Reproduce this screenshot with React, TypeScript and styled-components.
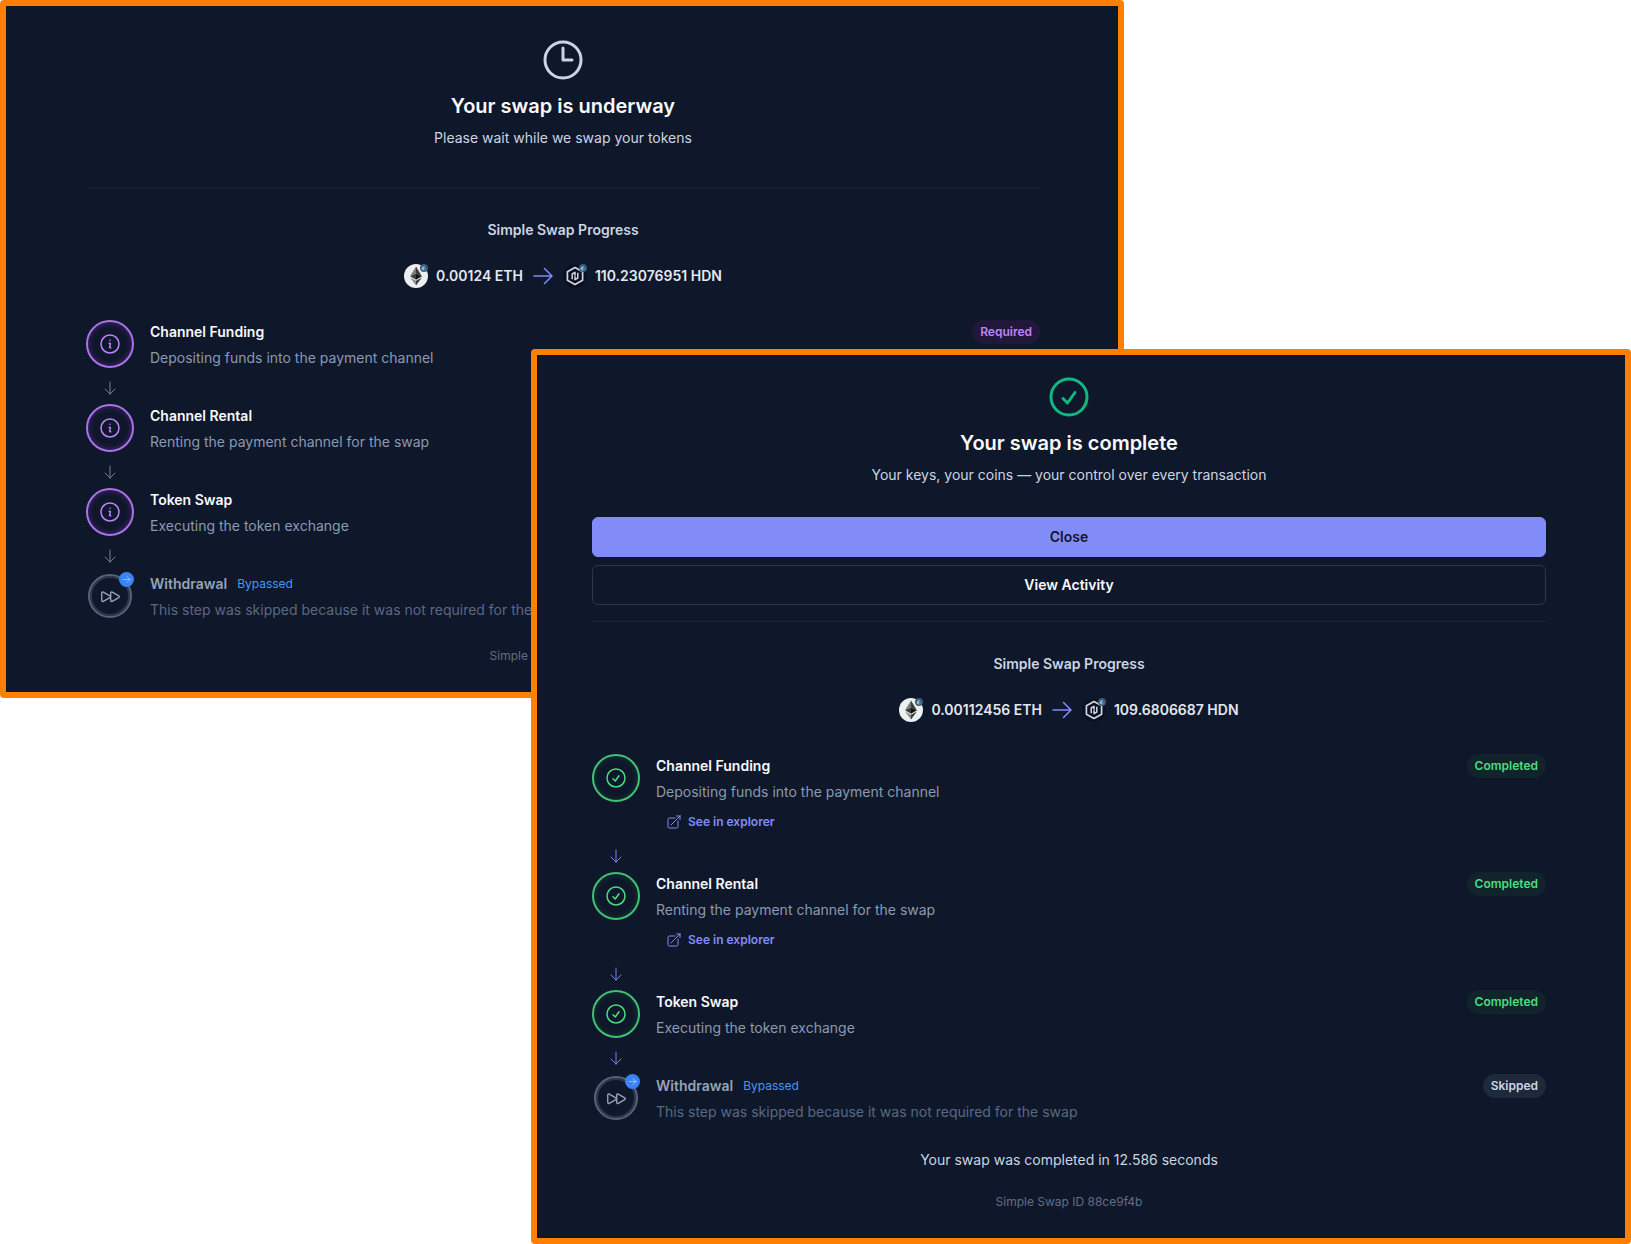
import React from "react";
import styled, { createGlobalStyle, css } from "styled-components";
import {
  HiOutlineArrowDown,
  HiOutlineArrowRight,
  HiOutlineArrowTopRightOnSquare,
  HiOutlineCheckCircle,
  HiOutlineClock,
  HiOutlineForward,
  HiOutlineInformationCircle,
} from "react-icons/hi2";

type Status = "required" | "completed" | "skipped";

interface Step {
  title: string;
  text: string;
  status: Status;
  explorer?: boolean;
}

interface Swap {
  from: string;
  to: string;
  id: string;
  steps: Step[];
}

const color = {
  panel: "#0f172a",
  frame: "#ff8000",
  white: "#f8fafc",
  light: "#cbd5e1",
  muted: "#8b9ab0",
  dim: "#5a6981",
  faint: "#606e86",
  line: "#1e293b",
  indigo: "#818cf8",
  purple: "#c084fc",
  green: "#4ade80",
  blue: "#4b93f5",
};

const GlobalStyle = createGlobalStyle`
  *, *::before, *::after { box-sizing: border-box; }
  body {
    margin: 0;
    background: #ffffff;
    font-family: Inter, Roboto, sans-serif;
    font-size: 14px;
    line-height: 20px;
  }
  h1, h2, h3, p, ol { margin: 0; padding: 0; font-size: inherit; }
  svg { display: block; flex: none; }
`;

const Stage = styled.main`
  display: grid;
  grid-template-columns: minmax(0, 531fr) minmax(0, 593fr) minmax(0, 507fr);
  grid-template-rows: 349px auto;
`;

const Window = styled.section<{ $front?: boolean }>`
  border: 6px solid ${color.frame};
  border-radius: 4px;
  background: ${color.panel};
  color: ${color.white};
  align-self: start;
  ${(p) =>
    p.$front
      ? css`
          grid-area: 2 / 2 / 3 / 4;
          padding: 18px 79px 28px 55px;
          z-index: 1;
        `
      : css`
          grid-area: 1 / 1 / 3 / 3;
          padding: 30px 78px 28px 80px;
        `}
`;

const Header = styled.header<{ $done?: boolean }>`
  display: flex;
  flex-direction: column;
  align-items: center;
  gap: 8px;
  text-align: center;

  > svg {
    color: ${(p) => (p.$done ? "#10b981" : color.light)};
  }
`;

const Title = styled.h1`
  font-size: 20px;
  line-height: 28px;
  font-weight: 600;
`;

const Subtitle = styled.p`
  color: ${color.light};
`;

const Actions = styled.div`
  display: flex;
  flex-direction: column;
  gap: 8px;
  margin-top: 32px;
`;

const Button = styled.button<{ $primary?: boolean }>`
  height: 40px;
  border-radius: 6px;
  border: 1px solid ${(p) => (p.$primary ? color.indigo : "#2b384b")};
  background: ${(p) => (p.$primary ? color.indigo : "transparent")};
  color: ${(p) => (p.$primary ? color.panel : color.white)};
  font: 600 14px/20px Inter, Roboto, sans-serif;
  cursor: pointer;
`;

const Divider = styled.hr<{ $wide?: boolean }>`
  margin: ${(p) => (p.$wide ? "39px 0 31px" : "16px 0 32px")};
  border: 0;
  height: ${(p) => (p.$wide ? 2 : 1)}px;
  background: ${(p) => (p.$wide ? "#151e30" : color.line)};
`;

const ProgressTitle = styled.h2`
  color: ${color.light};
  font-weight: 600;
  text-align: center;
`;

const Pair = styled.div`
  display: flex;
  justify-content: center;
  align-items: center;
  gap: 8px;
  margin: 24px 0 32px;
  color: ${color.indigo};
`;

const Amount = styled.span`
  color: #e2e8f0;
  font-weight: 600;
  white-space: nowrap;
`;

const StepList = styled.ol`
  list-style: none;
`;

const StepRow = styled.li`
  display: grid;
  grid-template-columns: 48px minmax(0, 1fr);
  column-gap: 16px;
`;

const Connector = styled.div<{ $status: Status }>`
  grid-column: 1 / 3;
  display: flex;
  justify-content: center;
  width: 48px;
  padding: 12px 0 8px;
  color: ${(p) => (p.$status === "completed" ? "#7681ea" : "#718096")};
`;

const Marker = styled.div`
  position: relative;
  grid-column: 1;
  display: flex;
  align-items: center;
  justify-content: center;
  width: 48px;
  height: 48px;
`;

const ring = {
  required: css`
    width: 48px;
    height: 48px;
    border-color: #ab72e6;
    box-shadow: inset 0 0 6px rgba(147, 51, 234, 0.45);
    color: ${color.purple};
  `,
  completed: css`
    width: 48px;
    height: 48px;
    border-color: #3fc274;
    box-shadow: inset 0 0 6px rgba(34, 197, 94, 0.2);
    color: ${color.green};
  `,
  skipped: css`
    width: 44px;
    height: 44px;
    border-color: #566479;
    box-shadow: inset 0 0 0 2px #2c394d;
    color: #94a3b8;
  `,
};

const Ring = styled.div<{ $status: Status }>`
  display: flex;
  align-items: center;
  justify-content: center;
  border: 2px solid;
  border-radius: 50%;
  ${(p) => ring[p.$status]}
`;

const SkipDot = styled.span`
  position: absolute;
  top: 0;
  right: 0;
  display: flex;
  align-items: center;
  justify-content: center;
  width: 15px;
  height: 15px;
  border-radius: 50%;
  background: #3b82f6;
  color: #dbeafe;
`;

const StepBody = styled.div`
  grid-column: 2;
`;

const StepHead = styled.div`
  display: flex;
  align-items: center;
  gap: 10px;
  height: 24px;
  margin-bottom: 4px;
`;

const StepTitle = styled.h3<{ $off: boolean }>`
  color: ${(p) => (p.$off ? "#94a3b8" : color.white)};
  font-weight: 600;
`;

const Bypassed = styled.span`
  color: ${color.blue};
  font-size: 12px;
`;

const pill = {
  required: css`
    background: #21173b;
    color: ${color.purple};
  `,
  completed: css`
    background: #11242c;
    color: ${color.green};
  `,
  skipped: css`
    background: #1e293b;
    color: ${color.light};
  `,
};

const Pill = styled.span<{ $status: Status }>`
  margin-left: auto;
  padding: 4px 8px;
  border-radius: 12px;
  font-size: 12px;
  line-height: 16px;
  font-weight: 600;
  ${(p) => pill[p.$status]}
`;

const StepText = styled.p<{ $off: boolean }>`
  color: ${(p) => (p.$off ? color.dim : color.muted)};
`;

const ExplorerLink = styled.a`
  display: inline-flex;
  align-items: center;
  gap: 6px;
  margin-top: 6px;
  padding: 6px 10px;
  color: ${color.indigo};
  font-size: 12px;
  line-height: 16px;
  font-weight: 600;
  text-decoration: none;
  vertical-align: top;
`;

const Duration = styled.p`
  margin-top: 28px;
  margin-bottom: -4px;
  color: ${color.light};
  text-align: center;
`;

const SwapId = styled.p`
  margin-top: 28px;
  color: ${color.faint};
  font-size: 12px;
  line-height: 16px;
  text-align: center;
`;

function ChainBadge() {
  return (
    <>
      <circle cx="20" cy="4" r="4" fill="#40566e" />
      <path d="M17.4 5.6c.2-2.6 1.6-3.7 4-3.6l-1.5 1.7 2.2.8-2 2.2Z" fill="#8fb4d4" />
      <path d="m20.4 3.6 2.3.6-1.5 2.6-1.6-.4Z" fill="#2f86c6" />
    </>
  );
}

function EthIcon() {
  return (
    <svg width="24" height="24" viewBox="0 0 24 24" role="img" aria-label="ETH">
      <circle cx="12" cy="12" r="12" fill="#ecf0f1" />
      <path d="M12 2.4 6.1 12.2 12 9.5Z" fill="#7a7a7a" />
      <path d="m12 2.4 5.9 9.8L12 9.5Z" fill="#3c3c3b" />
      <path d="M12 9.5 6.1 12.2l5.9 3.5Z" fill="#3c3c3b" />
      <path d="m12 9.5 5.9 2.7-5.9 3.5Z" fill="#141414" />
      <path d="m6.1 13.4 5.9 8.2v-4.8Z" fill="#8c8c8c" />
      <path d="M17.9 13.4 12 21.6v-4.8Z" fill="#3c3c3b" />
      <ChainBadge />
    </svg>
  );
}

function HdnIcon() {
  return (
    <svg width="24" height="24" viewBox="0 0 24 24" role="img" aria-label="HDN">
      <circle cx="12" cy="12" r="11.5" fill="#0a0f22" />
      <g fill="none" stroke="#d3d6df" strokeLinejoin="round">
        <path d="m12 3.6 7.6 4.2v8.4L12 20.4l-7.6-4.2V7.8Z" strokeWidth="1.7" />
        <path d="M9.2 15.2V10L12 8.4v3.4" strokeWidth="1.5" />
        <path d="M14.8 8.8V14L12 15.6v-3.4" strokeWidth="1.5" />
      </g>
      <ChainBadge />
    </svg>
  );
}

const statusLabel: Record<Status, string> = {
  required: "Required",
  completed: "Completed",
  skipped: "Skipped",
};

const statusIcon = {
  required: HiOutlineInformationCircle,
  completed: HiOutlineCheckCircle,
  skipped: HiOutlineForward,
};

interface StepItemProps {
  step: Step;
  previous?: Step;
  finished: boolean;
}

function StepItem({ step, previous, finished }: StepItemProps) {
  const Icon = statusIcon[step.status];
  const off = step.status === "skipped";
  return (
    <StepRow>
      {previous && (
        <Connector $status={previous.status}>
          <HiOutlineArrowDown size={16} />
        </Connector>
      )}
      <Marker>
        <Ring $status={step.status}>
          <Icon size={off ? 22 : 24} />
        </Ring>
        {off && (
          <SkipDot>
            <HiOutlineArrowRight size={9} />
          </SkipDot>
        )}
      </Marker>
      <StepBody>
        <StepHead>
          <StepTitle $off={off}>{step.title}</StepTitle>
          {off && <Bypassed>Bypassed</Bypassed>}
          {(finished || !off) && (
            <Pill $status={step.status}>{statusLabel[step.status]}</Pill>
          )}
        </StepHead>
        <StepText $off={off}>{step.text}</StepText>
        {step.explorer && (
          <ExplorerLink href="#explorer">
            <HiOutlineArrowTopRightOnSquare size={16} />
            See in explorer
          </ExplorerLink>
        )}
      </StepBody>
    </StepRow>
  );
}

function Progress({ swap, duration }: { swap: Swap; duration?: string }) {
  return (
    <>
      <ProgressTitle>Simple Swap Progress</ProgressTitle>
      <Pair>
        <EthIcon />
        <Amount>{swap.from}</Amount>
        <HiOutlineArrowRight size={24} />
        <HdnIcon />
        <Amount>{swap.to}</Amount>
      </Pair>
      <StepList>
        {swap.steps.map((step, i) => (
          <StepItem
            key={step.title}
            step={step}
            previous={swap.steps[i - 1]}
            finished={Boolean(duration)}
          />
        ))}
      </StepList>
      {duration && <Duration>{duration}</Duration>}
      <SwapId>Simple Swap ID {swap.id}</SwapId>
    </>
  );
}

const makeSteps = (status: Status): Step[] => [
  {
    title: "Channel Funding",
    text: "Depositing funds into the payment channel",
    status,
    explorer: status === "completed",
  },
  {
    title: "Channel Rental",
    text: "Renting the payment channel for the swap",
    status,
    explorer: status === "completed",
  },
  { title: "Token Swap", text: "Executing the token exchange", status },
  {
    title: "Withdrawal",
    text: "This step was skipped because it was not required for the swap",
    status: "skipped",
  },
];

const underway: Swap = {
  from: "0.00124 ETH",
  to: "110.23076951 HDN",
  id: "88ce9f4b",
  steps: makeSteps("required"),
};

const complete: Swap = {
  from: "0.00112456 ETH",
  to: "109.6806687 HDN",
  id: "88ce9f4b",
  steps: makeSteps("completed"),
};

export default function App() {
  return (
    <>
      <GlobalStyle />
      <Stage>
        <Window>
          <Header>
            <HiOutlineClock size={48} />
            <Title>Your swap is underway</Title>
            <Subtitle>Please wait while we swap your tokens</Subtitle>
          </Header>
          <Divider $wide />
          <Progress swap={underway} />
        </Window>
        <Window $front>
          <Header $done>
            <HiOutlineCheckCircle size={48} />
            <Title>Your swap is complete</Title>
            <Subtitle>Your keys, your coins — your control over every transaction</Subtitle>
          </Header>
          <Actions>
            <Button type="button" $primary>
              Close
            </Button>
            <Button type="button">View Activity</Button>
          </Actions>
          <Divider />
          <Progress swap={complete} duration="Your swap was completed in 12.586 seconds" />
        </Window>
      </Stage>
    </>
  );
}
